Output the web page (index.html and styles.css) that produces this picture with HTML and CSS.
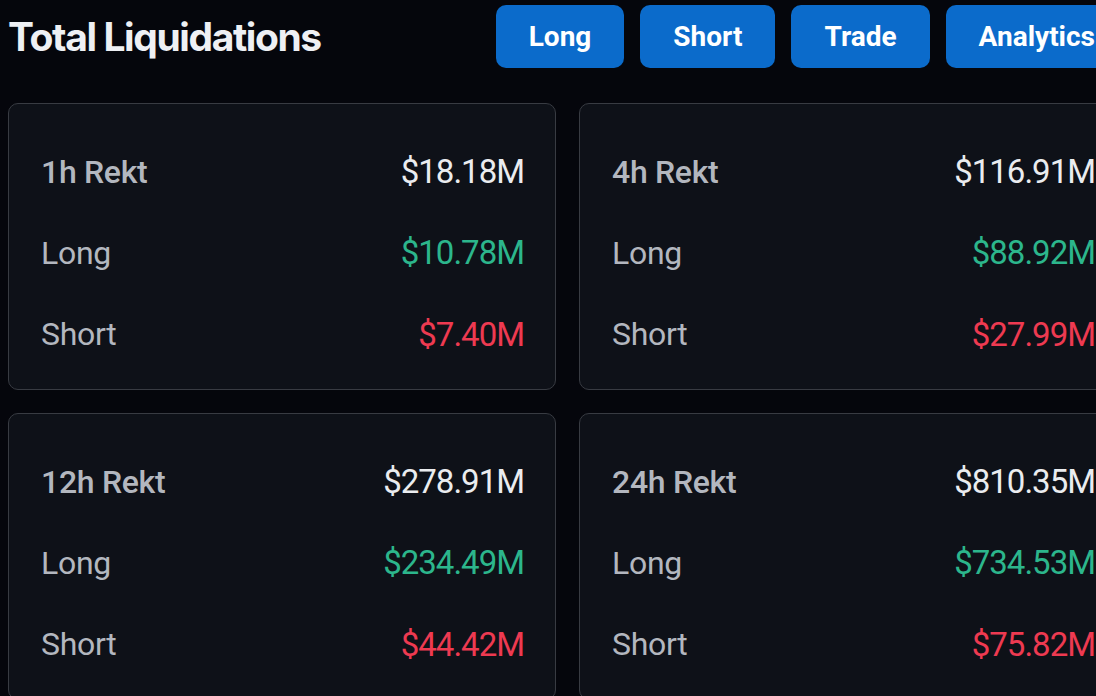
FILE: index.html
```html
<!DOCTYPE html>
<html>
<head>
<meta charset="utf-8">
<link rel="stylesheet" href="styles.css">
</head>
<body>
<div class="page">
  <header class="header">
    <h1 class="title">Total Liquidations</h1>
    <nav class="nav">
      <button class="btn">Long</button>
      <button class="btn">Short</button>
      <button class="btn">Trade</button>
      <button class="btn">Analytics</button>
    </nav>
  </header>
  <main class="grid">
    <section class="card">
      <div class="row"><span class="label head">1h Rekt</span><span class="val">$18.18M</span></div>
      <div class="row"><span class="label">Long</span><span class="val green">$10.78M</span></div>
      <div class="row"><span class="label">Short</span><span class="val red">$7.40M</span></div>
    </section>
    <section class="card">
      <div class="row"><span class="label head">4h Rekt</span><span class="val">$116.91M</span></div>
      <div class="row"><span class="label">Long</span><span class="val green">$88.92M</span></div>
      <div class="row"><span class="label">Short</span><span class="val red">$27.99M</span></div>
    </section>
    <section class="card">
      <div class="row"><span class="label head">12h Rekt</span><span class="val">$278.91M</span></div>
      <div class="row"><span class="label">Long</span><span class="val green">$234.49M</span></div>
      <div class="row"><span class="label">Short</span><span class="val red">$44.42M</span></div>
    </section>
    <section class="card">
      <div class="row"><span class="label head">24h Rekt</span><span class="val">$810.35M</span></div>
      <div class="row"><span class="label">Long</span><span class="val green">$734.53M</span></div>
      <div class="row"><span class="label">Short</span><span class="val red">$75.82M</span></div>
    </section>
  </main>
</div>
</body>
</html>
```

FILE: styles.css
```css
html, body {
  margin: 0;
  padding: 0;
  background: #05060c;
  overflow: hidden;
}
.page {
  width: 1127px;
  padding: 5px 0 0 8px;
  font-family: Roboto, "Liberation Sans", sans-serif;
}
.header {
  display: flex;
  align-items: center;
  justify-content: space-between;
  height: 63px;
  padding-right: 7px;
}
.title {
  margin: 0;
  font-family: Inter, "Liberation Sans", sans-serif;
  font-weight: 700;
  font-size: 39px;
  letter-spacing: -1.4px;
  color: #eef0f4;
}
.nav {
  display: flex;
  gap: 16px;
}
.btn {
  height: 63px;
  padding: 0 33px;
  border: none;
  border-radius: 10px;
  background: #0b6bcb;
  color: #ffffff;
  font-family: Roboto, "Liberation Sans", sans-serif;
  font-weight: 700;
  font-size: 28px;
  letter-spacing: 0;
}
.grid {
  display: grid;
  grid-template-columns: 548px 548px;
  gap: 23px;
  margin-top: 35px;
}
.card {
  height: 287px;
  box-sizing: border-box;
  border: 1.5px solid #383b42;
  border-radius: 10px;
  background: #0e1118;
  padding: 27px 31px 14px 32px;
  display: flex;
  flex-direction: column;
}
.row {
  height: 82px;
  display: flex;
  align-items: center;
  justify-content: space-between;
}
.label {
  font-size: 32px;
  color: #b3b7bf;
  letter-spacing: -0.3px;
}
.label.head {
  font-weight: 500;
}
.val {
  font-size: 33px;
  color: #eaecef;
  letter-spacing: -1px;
}
.green { color: #2cb68c; }
.red { color: #ee3a51; }
```
